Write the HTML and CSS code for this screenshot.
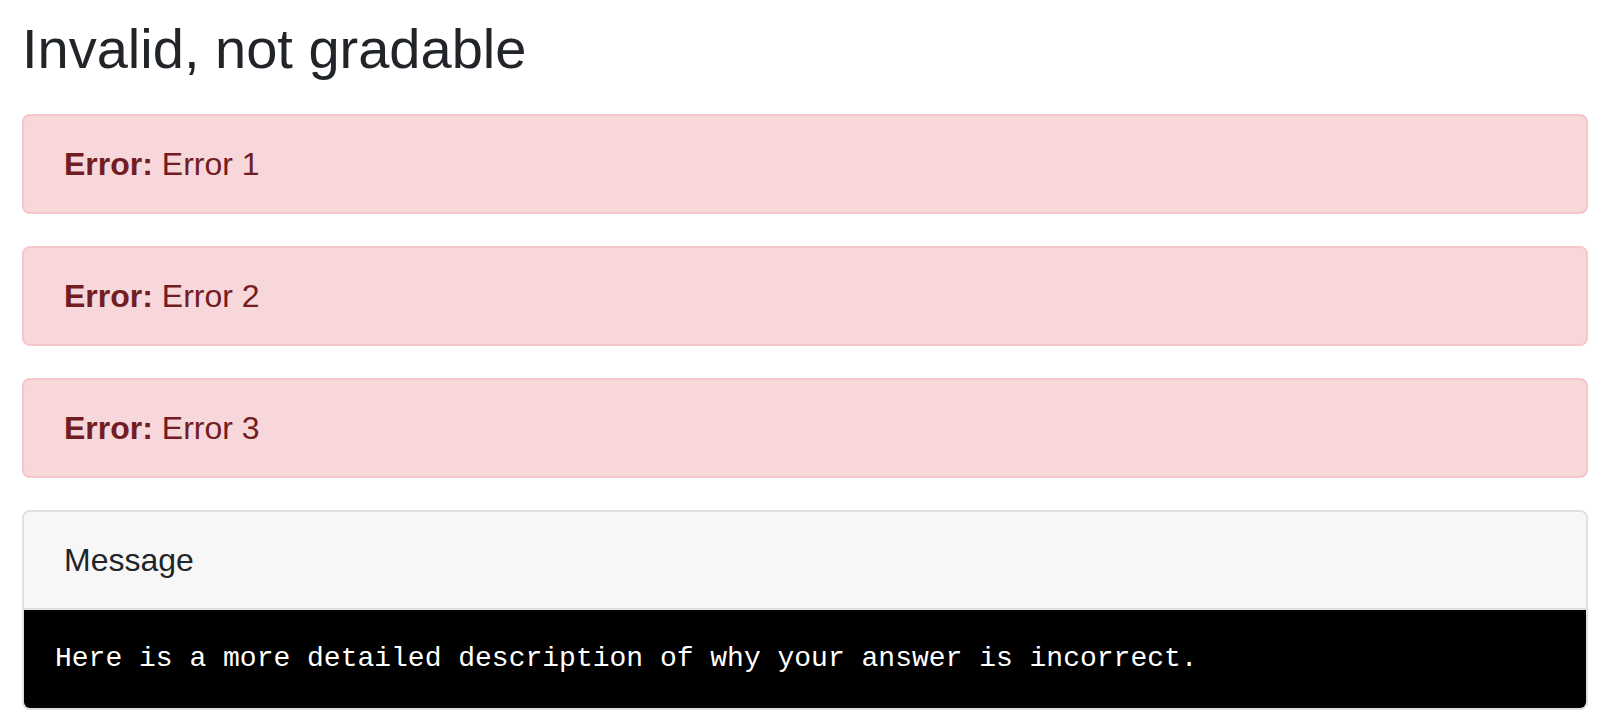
FILE: index.html
```html
<!DOCTYPE html>
<html lang="en">
<head>
<meta charset="utf-8">
<title>Invalid, not gradable</title>
<link rel="stylesheet" href="styles.css">
</head>
<body>
<main class="page">
  <h1 class="title">Invalid, not gradable</h1>
  <div class="alert"><strong>Error:</strong> Error 1</div>
  <div class="alert"><strong>Error:</strong> Error 2</div>
  <div class="alert"><strong>Error:</strong> Error 3</div>
  <section class="card">
    <div class="card-header">Message</div>
    <pre class="output">Here is a more detailed description of why your answer is incorrect.</pre>
  </section>
</main>
</body>
</html>
```
FILE: styles.css
```css
html, body {
  margin: 0;
  padding: 0;
  background: #fff;
}
body {
  font-family: "Liberation Sans", Arial, Helvetica, sans-serif;
  font-size: 32px;
  color: #212529;
}
.page {
  padding: 15px 12px 0 22px;
}
.title {
  margin: 0 0 32px;
  font-size: 56px;
  font-weight: 400;
  line-height: 1.2;
  color: #212529;
}
.alert {
  background: #f8d7da;
  border: 2px solid #f5c6cb;
  color: #721c24;
  border-radius: 8px;
  padding: 24px 40px;
  line-height: 48px;
  margin-bottom: 32px;
}
.alert strong {
  font-weight: 700;
}
.card {
  border: 2px solid #dfdfdf;
  border-radius: 8px;
  overflow: hidden;
}
.card-header {
  background: #f7f7f7;
  border-bottom: 2px solid #dfdfdf;
  padding: 24px 40px;
  line-height: 48px;
}
.output {
  margin: 0;
  background: #000;
  color: #fff;
  font-family: "Liberation Mono", "Courier New", monospace;
  font-size: 28px;
  line-height: 42px;
  padding: 28px 31px;
  white-space: pre;
}
```
